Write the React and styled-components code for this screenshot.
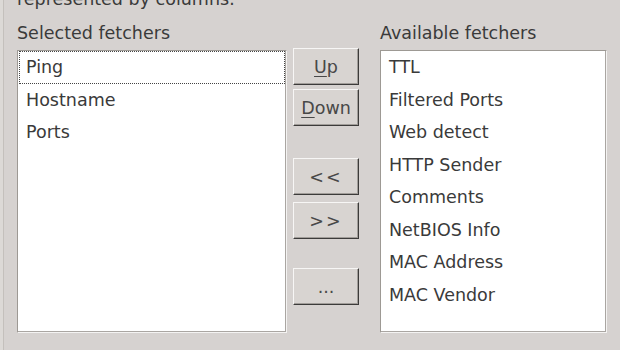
import React from 'react';
import styled, { createGlobalStyle } from 'styled-components';

const GlobalStyle = createGlobalStyle`
  html, body {
    margin: 0;
    padding: 0;
    background: #dcd9d6;
  }
`;

const Page = styled.div`
  width: 617px;
  height: 350px;
  overflow: hidden;
  box-sizing: border-box;
  background: #d6d2d0;
  border-left: 1px solid #c4c0bc;
  margin-left: 3px;
  padding-left: 13px;
  font-family: "DejaVu Sans", Verdana, sans-serif;
  font-size: 17.5px;
  color: #3a3a3a;
`;

const Intro = styled.div`
  margin-top: -11px;
  line-height: 20px;
  white-space: nowrap;
`;

const Columns = styled.div`
  display: grid;
  grid-template-columns: 270px 93px 227px;
  margin-top: 11px;
`;

const Column = styled.div`
  display: flex;
  flex-direction: column;
`;

const Label = styled.div`
  line-height: 20px;
  height: 20px;
  margin-top: 3px;
  margin-bottom: 7px;
`;

const ListBox = styled.div`
  height: 283px;
  box-sizing: border-box;
  background: #fff;
  border: 1px solid;
  border-color: #9d9994 #f4f3f2 #f4f3f2 #9d9994;
  box-shadow: inset -1px -1px 0 #aaa6a2;
  padding: 0 1px;
`;

const Item = styled.div`
  height: 32.5px;
  line-height: 32.5px;
  padding-left: 7px;
  box-sizing: border-box;
  white-space: nowrap;
  outline: ${p => (p.focused ? '1px dotted #444' : 'none')};
  outline-offset: -1px;
`;

const ButtonStack = styled.div`
  display: flex;
  flex-direction: column;
  padding-top: 28px;
  margin: 0 21px 0 6px;
`;

const Button = styled.div`
  height: 37px;
  box-sizing: border-box;
  display: flex;
  align-items: center;
  justify-content: center;
  border: 1px solid;
  border-color: #f7f6f5 #3c3b3a #3c3b3a #f7f6f5;
  box-shadow: inset -1px -1px 0 #a19d99;
  background: #d8d4d1;
  color: #484848;
  margin-top: ${p => p.gap || 0}px;
  letter-spacing: ${p => (p.wide ? '2px' : '0')};
  u {
    text-decoration-thickness: 1px;
    text-underline-offset: 3px;
  }
`;

const selected = ['Ping', 'Hostname', 'Ports'];
const available = [
  'TTL',
  'Filtered Ports',
  'Web detect',
  'HTTP Sender',
  'Comments',
  'NetBIOS Info',
  'MAC Address',
  'MAC Vendor',
];

export default function App() {
  return (
    <>
      <GlobalStyle />
      <Page>
        <Intro>represented by columns:</Intro>
        <Columns>
          <Column>
            <Label>Selected fetchers</Label>
            <ListBox>
              {selected.map((name, i) => (
                <Item key={name} focused={i === 0}>{name}</Item>
              ))}
            </ListBox>
          </Column>
          <ButtonStack>
            <Button><span><u>U</u>p</span></Button>
            <Button gap={4}><span><u>D</u>own</span></Button>
            <Button gap={32} wide>&lt;&lt;</Button>
            <Button gap={7} wide>&gt;&gt;</Button>
            <Button gap={29}>...</Button>
          </ButtonStack>
          <Column>
            <Label>Available fetchers</Label>
            <ListBox>
              {available.map(name => (
                <Item key={name}>{name}</Item>
              ))}
            </ListBox>
          </Column>
        </Columns>
      </Page>
    </>
  );
}
